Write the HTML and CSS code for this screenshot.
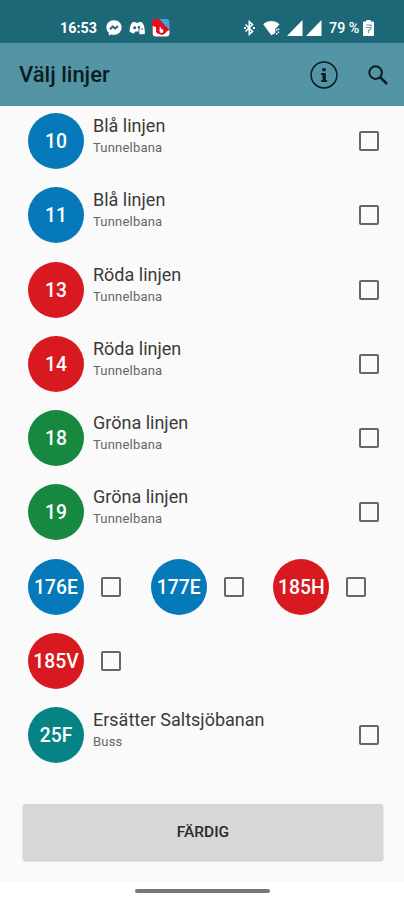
FILE: index.html
```
<!DOCTYPE html>
<html lang="sv">
<head>
  <meta charset="UTF-8">
  <title>Välj linjer</title>
  <link rel="stylesheet" href="styles.css">
</head>
<body>
  <div class="status-bar">
    <span class="clock">16:53</span>
    <svg class="messenger" width="16" height="16" viewBox="0 0 16 16">
      <path fill="#fff" d="M8 .3C3.6.3.4 3.4.4 7.5c0 2.200.9 4 2.400 5.300V15.600l2.400-1.200c.9.200 1.800.4 2.800.4 4.400 0 7.600-3.200 7.600-7.300S12.400.3 8 .3z"/>
      <path fill="none" stroke="#1d6876" stroke-width="2" d="M4 9.300l2.700-2.800 2.500 2 2.800-2.400"/>
    </svg>
    <svg class="discord" width="17" height="14" viewBox="0 0 17 14">
      <path fill="#fff" d="M3.200 1.500L6 .7l.7 1.100h3L10.500.7l2.800.8c1.300 1.900 2 3.700 2.200 6H9.600v3H6.300L5 12.500C3.200 12.300 1.700 11.700.7 10.800.5 7.200 1.300 4.200 3.200 1.500z"/>
      <circle cx="5.700" cy="6.800" r="1.500" fill="#1d6876"/>
      <circle cx="10.100" cy="6.300" r="1.400" fill="#1d6876"/>
      <path fill="#fff" d="M10.300 8.500h5.500v4.700h-5.500z"/>
      <path fill="none" stroke="#fff" stroke-width="1.200" d="M11.500 9V7.500a1.600 1.600 0 0 1 3.200 0V9"/>
    </svg>
    <svg class="app" width="18" height="18" viewBox="0 0 18 18">
      <rect width="17.500" height="17.500" rx="3.500" fill="#e5101c"/>
      <path fill="#35a9e0" d="M7 0h7a3.500 3.500 0 0 1 3.500 3.500V11z"/>
      <path fill="#fff" d="M.7 7L4 8v5c2 2.500 7 3.500 10.500-.5l3-1.500v3a3.500 3.500 0 0 1-3.500 3.500H4A3.300 3.300 0 0 1 .7 14z"/>
      <path fill="#e5101c" d="M4 2l4-1 8 9.500-3 4-3 1.500-5-2z"/>
      <circle cx="9.500" cy="12" r="1.900" fill="#fff"/>
      <path stroke="#fff" stroke-width="1.200" d="M8.300 8v4"/>
    </svg>
    <svg class="bluetooth" width="11" height="16" viewBox="0 0 11 16">
      <path fill="none" stroke="#fff" stroke-width="1.600" d="M1.500 4.500l7 7L5.300 14.300V1.700l3.200 2.800-7 7"/>
      <path fill="#fff" d="M0 7h2v2H0zM9 7h2v2H9z"/>
    </svg>
    <svg class="wifi" width="17" height="16" viewBox="0 0 17 16">
      <path fill="#fff" d="M.2 4.300C4.900-.1 11.700-.1 16.400 4.300L13 8.500v4.200l-4.700 2.600z"/>
      <path fill="#1d6876" d="M12.300 8.500H17V16h-4.700z"/>
      <path fill="#fff" d="M13 9.300h1.400v1.400H13zM14.800 8.500h1.400v1.400h-1.400zM13 13h1.400v1.400H13zM14.800 11.500h1.400V13h-1.400z"/>
    </svg>
    <svg class="signal" width="16" height="16" viewBox="0 0 16 16"><path fill="#fff" d="M0 16L15.500 0v16z"/></svg>
    <svg class="signal second" width="16" height="16" viewBox="0 0 16 16"><path fill="#fff" d="M0 16L15.500 0v16z"/></svg>
    <span class="percent">79 %</span>
    <svg class="battery" width="11" height="16" viewBox="0 0 11 16">
      <path fill="#fff" d="M3.300 0h4.400v1.600H10a1 1 0 0 1 1 1V15a1 1 0 0 1-1 1H1a1 1 0 0 1-1-1V2.600a1 1 0 0 1 1-1h2.300z"/>
      <path fill="none" stroke="#6b9ca5" stroke-width="1.200" d="M3 5h5v3.500L5.500 11v2M3 7.500h4"/>
    </svg>
  </div>

  <header class="toolbar">
    <h1>Välj linjer</h1>
    <svg class="info" width="28" height="28" viewBox="0 0 28 28">
      <circle cx="14" cy="14" r="12.900" fill="none" stroke="#0b1c20" stroke-width="1.500"/>
      <path fill="#0b1c20" d="M12.300 7.200h3.400v3h-3.400zM11 12h4.800v7.200h1.400v1.900H11v-1.900h1.500v-5.300H11z"/>
    </svg>
    <svg class="search" width="20" height="20" viewBox="0 0 20 20">
      <circle cx="7.600" cy="7.600" r="6.300" fill="none" stroke="#0b1c20" stroke-width="2"/>
      <path stroke="#0b1c20" stroke-width="2.500" d="M12 12l7 7"/>
    </svg>
  </header>

  <main class="lines">
    <div class="row">
      <div class="badge blue">10</div>
      <div class="info-text"><div class="name">Blå linjen</div><div class="type">Tunnelbana</div></div>
      <input type="checkbox">
    </div>
    <div class="row">
      <div class="badge blue">11</div>
      <div class="info-text"><div class="name">Blå linjen</div><div class="type">Tunnelbana</div></div>
      <input type="checkbox">
    </div>
    <div class="row">
      <div class="badge red">13</div>
      <div class="info-text"><div class="name">Röda linjen</div><div class="type">Tunnelbana</div></div>
      <input type="checkbox">
    </div>
    <div class="row">
      <div class="badge red">14</div>
      <div class="info-text"><div class="name">Röda linjen</div><div class="type">Tunnelbana</div></div>
      <input type="checkbox">
    </div>
    <div class="row">
      <div class="badge green">18</div>
      <div class="info-text"><div class="name">Gröna linjen</div><div class="type">Tunnelbana</div></div>
      <input type="checkbox">
    </div>
    <div class="row">
      <div class="badge green">19</div>
      <div class="info-text"><div class="name">Gröna linjen</div><div class="type">Tunnelbana</div></div>
      <input type="checkbox">
    </div>
    <div class="grid">
      <label class="cell"><span class="badge blue">176E</span><input type="checkbox"></label>
      <label class="cell"><span class="badge blue">177E</span><input type="checkbox"></label>
      <label class="cell"><span class="badge red">185H</span><input type="checkbox"></label>
      <label class="cell"><span class="badge red">185V</span><input type="checkbox"></label>
    </div>
    <div class="row">
      <div class="badge teal">25F</div>
      <div class="info-text"><div class="name">Ersätter Saltsjöbanan</div><div class="type">Buss</div></div>
      <input type="checkbox">
    </div>
  </main>

  <footer>
    <button>FÄRDIG</button>
  </footer>
  <div class="nav-bar"><div class="handle"></div></div>
</body>
</html>
```
FILE: styles.css
```
* {
  box-sizing: border-box;
}

body {
  margin: 0;
  height: 900px;
  display: flex;
  flex-direction: column;
  overflow: hidden;
  background: #fafafa;
  font-family: Roboto, sans-serif;
}

/* Status bar */
.status-bar {
  height: 43px;
  flex: none;
  display: flex;
  align-items: center;
  padding: 13px 30px 0 60px;
  background: #1d6876;
  color: #fff;
  font-size: 14.3px;
  font-weight: 700;
  white-space: nowrap;
}

.status-bar svg {
  flex: none;
}

.clock {
  width: 46px;
}

.discord {
  margin-left: 7px;
}

.app {
  margin-left: 6px;
}

.bluetooth {
  margin-left: auto;
}

.wifi {
  margin-left: 8px;
}

.signal {
  margin-left: 7px;
}

.signal.second {
  margin-left: 3px;
}

.percent {
  width: 30px;
  margin: 0 4px 0 7px;
  font-weight: 500;
}

/* Toolbar */
.toolbar {
  height: 63px;
  flex: none;
  display: flex;
  align-items: center;
  padding: 0 16px 0 19px;
  background: #5395a5;
}

h1 {
  margin: 0 auto 0 0;
  color: #0b1c20;
  font-size: 22px;
  font-weight: 500;
}

.search {
  margin-left: 30px;
}

/* List */
.lines {
  padding-top: 7px;
}

.row,
.cell {
  height: 74.25px;
  display: flex;
  align-items: flex-start;
}

.row {
  padding: 0 25px 0 28px;
}

.badge {
  width: 56px;
  height: 56px;
  flex: none;
  border-radius: 50%;
  color: #fff;
  font-size: 19.3px;
  font-weight: 500;
  line-height: 58px;
  text-align: center;
}

.blue {
  background: #0579b9;
}

.red {
  background: #d81920;
}

.green {
  background: #168840;
}

.teal {
  background: #078385;
}

.info-text {
  flex: 1;
  margin-left: 9px;
}

.name {
  margin-top: 2px;
  color: #3a3a3a;
  font-size: 18px;
  line-height: 22px;
}

.type {
  color: #666;
  font-size: 13px;
  letter-spacing: 0.2px;
  line-height: 21px;
}

input[type="checkbox"] {
  appearance: none;
  width: 20px;
  height: 20px;
  flex: none;
  margin: 18px 0 0;
  border: 2px solid #666;
  border-radius: 2px;
}

.grid {
  display: grid;
  grid-template-columns: repeat(3, 122.7px);
  padding-left: 28px;
}

.cell input[type="checkbox"] {
  margin-left: 17px;
}

/* Bottom */
footer {
  margin-top: auto;
  padding: 0 21px 22px 23px;
}

button {
  display: block;
  width: 100%;
  height: 56px;
  border: none;
  border-radius: 2px;
  background: #d6d7d7;
  box-shadow: 0 1px 2px rgba(0, 0, 0, 0.25);
  color: #2a2a2a;
  font-family: inherit;
  font-size: 15.5px;
  font-weight: 500;
}

.nav-bar {
  height: 18px;
  flex: none;
  background: #fff;
}

.handle {
  width: 135px;
  height: 4px;
  margin: 7px auto 0;
  border-radius: 2px;
  background: #777;
}
```
